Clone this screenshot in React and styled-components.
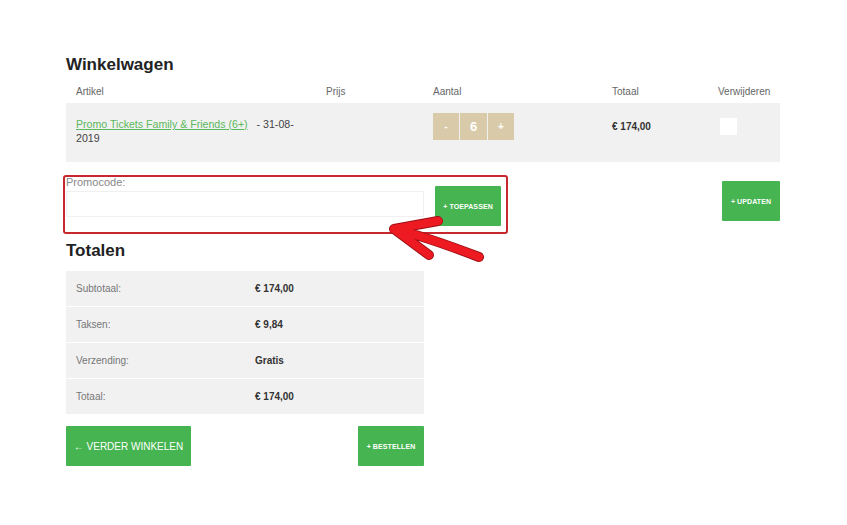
import React from "react";
import styled, { createGlobalStyle } from "styled-components";

const GlobalStyle = createGlobalStyle`
  body {
    margin: 0;
    background: #fff;
    font-family: "Liberation Sans", Arial, sans-serif;
    color: #333;
  }
`;

const GREEN = "#46b450";
const BEIGE = "#d9cbaa";
const ROW_BG = "#f1f1f1";

const Page = styled.div`
  width: 714px;
  padding: 54px 0 40px 66px;
`;

const Heading = styled.h2`
  margin: 0;
  font-size: 17px;
  line-height: 22px;
  font-weight: 700;
  color: #222;
`;

const CartGrid = styled.div`
  display: grid;
  grid-template-columns: 260px 107px 179px 106px 1fr;
  margin-top: 4px;
`;

const HeadCell = styled.div`
  font-size: 10px;
  line-height: 23px;
  color: #666;
  padding-left: ${(p) => (p.$first ? "10px" : "0")};
`;

const Cell = styled.div`
  background: ${ROW_BG};
  height: 59px;
  box-sizing: border-box;
  padding: 10px 0 0 ${(p) => (p.$first ? "10px" : "0")};
`;

const ItemText = styled.div`
  font-size: 10.6px;
  line-height: 14px;
  color: #444;
  padding: 4px 12px 0 0;
`;

const ItemLink = styled.a`
  color: #5cb85c;
  text-decoration: underline;
  margin-right: 9px;
`;

const Qty = styled.div`
  display: flex;
  gap: 1px;
`;

const QtyBox = styled.div`
  width: ${(p) => (p.$mid ? "27px" : "26px")};
  height: 27px;
  background: ${BEIGE};
  color: #fff;
  display: flex;
  align-items: center;
  justify-content: center;
  font-size: ${(p) => (p.$mid ? "13px" : "10px")};
  font-weight: 700;
`;

const Price = styled.div`
  font-size: 10px;
  font-weight: 700;
  line-height: 27px;
  color: #333;
`;

const CheckBox = styled.div`
  width: 17px;
  height: 17px;
  margin: 5px 0 0 2px;
  background: #fff;
`;

const PromoRow = styled.div`
  position: relative;
  display: flex;
  justify-content: space-between;
  align-items: flex-start;
  margin: 13px 0 0 -3px;
`;

const PromoBox = styled.div`
  display: flex;
  align-items: flex-start;
  width: 440px;
  height: 55px;
  border: 2px solid #c9272e;
  border-radius: 3px;
  padding-left: 1px;
`;

const PromoField = styled.div`
  display: flex;
  flex-direction: column;
`;

const Label = styled.div`
  font-size: 11px;
  line-height: 12px;
  color: #888;
  margin-top: -1px;
`;

const Input = styled.input`
  width: 358px;
  height: 26px;
  box-sizing: border-box;
  margin-top: 3px;
  border: 1px solid #f0f0f0;
  background: #fff;
`;

const Button = styled.button`
  background: ${GREEN};
  color: #fff;
  border: none;
  border-radius: 1px;
  padding: 0;
  height: 40px;
  width: ${(p) => p.$w}px;
  margin-top: ${(p) => p.$top || 0}px;
  margin-left: ${(p) => p.$left || 0}px;
  font-family: inherit;
  font-size: ${(p) => p.$size || 7}px;
  font-weight: ${(p) => (p.$size ? 400 : 700)};
  letter-spacing: ${(p) => (p.$size ? "0" : "0.1px")};
  display: flex;
  align-items: center;
  justify-content: center;
  gap: 3px;
`;

const Arrow = styled.svg`
  position: absolute;
  left: 324px;
  top: 40px;
  overflow: visible;
`;

const TotalsHeading = styled(Heading)`
  margin-top: 6px;
`;

const Totals = styled.div`
  width: 358px;
  margin-top: 9px;
  display: flex;
  flex-direction: column;
  gap: 1px;
`;

const TotalRow = styled.div`
  display: grid;
  grid-template-columns: 179px 1fr;
  align-items: center;
  height: 35px;
  padding-left: 10px;
  background: ${ROW_BG};
  font-size: 10px;
`;

const TotalLabel = styled.div`
  color: #777;
`;

const TotalValue = styled.div`
  font-weight: 700;
  color: #333;
`;

const Actions = styled.div`
  width: 358px;
  display: flex;
  justify-content: space-between;
  margin-top: 12px;
`;

const totals = [
  ["Subtotaal:", "€ 174,00"],
  ["Taksen:", "€ 9,84"],
  ["Verzending:", "Gratis"],
  ["Totaal:", "€ 174,00"],
];

const arrowPath = "M7 14 L51 6 M7 14 L42 40 M7 14 Q40 22 92 42";

export default function App() {
  return (
    <Page>
      <GlobalStyle />
      <Heading>Winkelwagen</Heading>
      <CartGrid>
        <HeadCell $first>Artikel</HeadCell>
        <HeadCell>Prijs</HeadCell>
        <HeadCell>Aantal</HeadCell>
        <HeadCell>Totaal</HeadCell>
        <HeadCell>Verwijderen</HeadCell>

        <Cell $first>
          <ItemText>
            <ItemLink href="#">Promo Tickets Family &amp; Friends (6+)</ItemLink>
            - 31-08-2019
          </ItemText>
        </Cell>
        <Cell />
        <Cell>
          <Qty>
            <QtyBox>-</QtyBox>
            <QtyBox $mid>6</QtyBox>
            <QtyBox>+</QtyBox>
          </Qty>
        </Cell>
        <Cell>
          <Price>€ 174,00</Price>
        </Cell>
        <Cell>
          <CheckBox />
        </Cell>
      </CartGrid>

      <PromoRow>
        <PromoBox>
          <PromoField>
            <Label>Promocode:</Label>
            <Input />
          </PromoField>
          <Button $w={66} $top={9} $left={11}>+ TOEPASSEN</Button>
        </PromoBox>
        <Button $w={58} $top={6}>+ UPDATEN</Button>
        <Arrow width="100" height="45" viewBox="0 0 100 45">
          <g fill="none" strokeLinecap="round" strokeLinejoin="round">
            <path d={arrowPath} stroke="#9e1016" strokeWidth="10" />
            <path d={arrowPath} stroke="#ee1a22" strokeWidth="8" />
          </g>
        </Arrow>
      </PromoRow>

      <TotalsHeading>Totalen</TotalsHeading>
      <Totals>
        {totals.map(([label, value]) => (
          <TotalRow key={label}>
            <TotalLabel>{label}</TotalLabel>
            <TotalValue>{value}</TotalValue>
          </TotalRow>
        ))}
      </Totals>

      <Actions>
        <Button $w={125} $size={10}>← VERDER WINKELEN</Button>
        <Button $w={66}>+ BESTELLEN</Button>
      </Actions>
    </Page>
  );
}
